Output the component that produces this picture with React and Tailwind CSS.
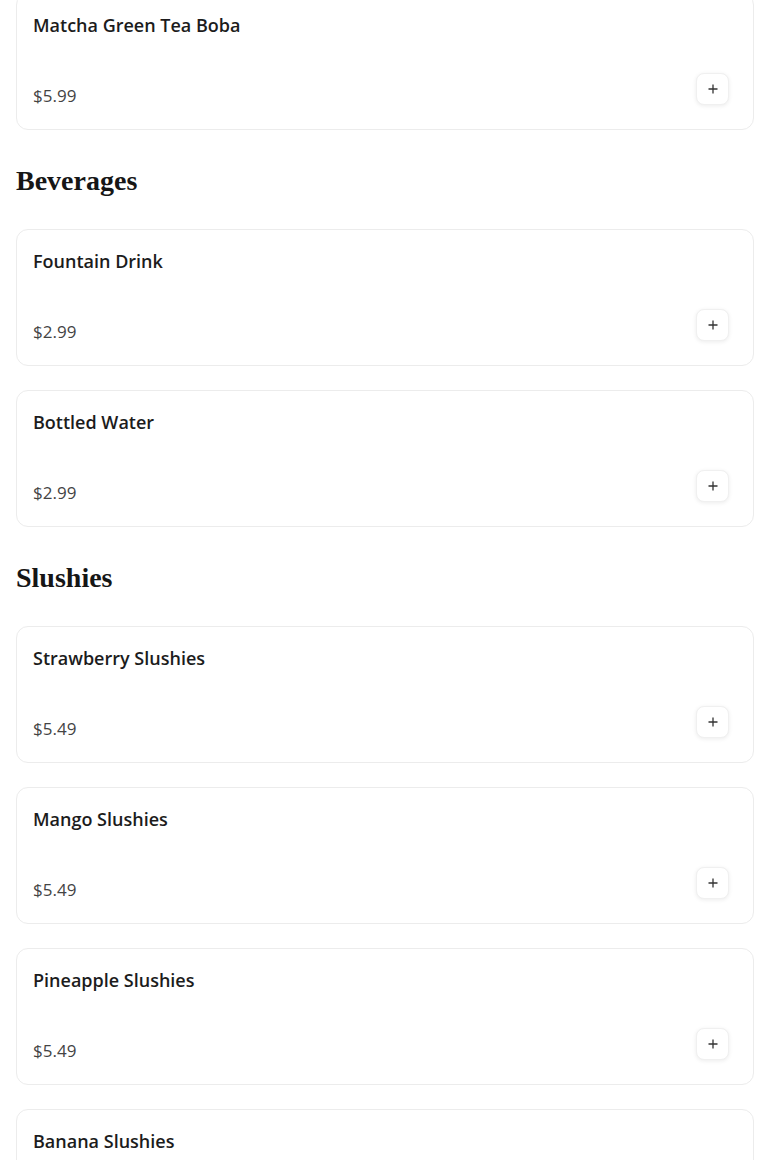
import React from "react";

const sections = [
  { title: null, items: [{ name: "Matcha Green Tea Boba", price: "$5.99" }] },
  {
    title: "Beverages",
    items: [
      { name: "Fountain Drink", price: "$2.99" },
      { name: "Bottled Water", price: "$2.99" },
    ],
  },
  {
    title: "Slushies",
    items: [
      { name: "Strawberry Slushies", price: "$5.49" },
      { name: "Mango Slushies", price: "$5.49" },
      { name: "Pineapple Slushies", price: "$5.49" },
      { name: "Banana Slushies", price: "$5.49" },
    ],
  },
];

function PlusIcon() {
  return (
    <svg width="12" height="12" viewBox="0 0 12 12" fill="none" stroke="#333" strokeWidth="1.3">
      <path d="M6 1.5v9M1.5 6h9" />
    </svg>
  );
}

function Card({ name, price }) {
  return (
    <div className="flex flex-col rounded-xl border border-[#ececec] bg-white pl-4 pr-6 pt-4 pb-6">
      <div className="h-[29px] pt-px text-[18px] font-semibold leading-[28px] text-[#1c1c1c]">{name}</div>
      <div className="mt-[34px] flex h-[32px] items-start justify-between">
        <div className="pt-[11px] text-[17px] leading-[24px] text-[#444]">{price}</div>
        <button className="flex h-[32px] w-[33px] items-center justify-center rounded-lg border border-[#f0f0f0] bg-white shadow-[0_1px_4px_rgba(0,0,0,0.08)]">
          <PlusIcon />
        </button>
      </div>
    </div>
  );
}

export default function App() {
  return (
    <div
      className="min-h-screen bg-white px-4"
      style={{ fontFamily: '"Open Sans", "DejaVu Sans", sans-serif' }}
    >
      <div className="-mt-[7px]">
        {sections.map((s, i) => (
          <div key={i}>
            {s.title && (
              <h2
                className="mt-[35px] mb-[32px] h-[32px] text-[28px] font-bold leading-[32px] text-[#161616]"
                style={{ fontFamily: '"Liberation Serif", serif' }}
              >
                {s.title}
              </h2>
            )}
            <div className="flex flex-col gap-6">
              {s.items.map((it) => (
                <Card key={it.name} {...it} />
              ))}
            </div>
          </div>
        ))}
      </div>
    </div>
  );
}
